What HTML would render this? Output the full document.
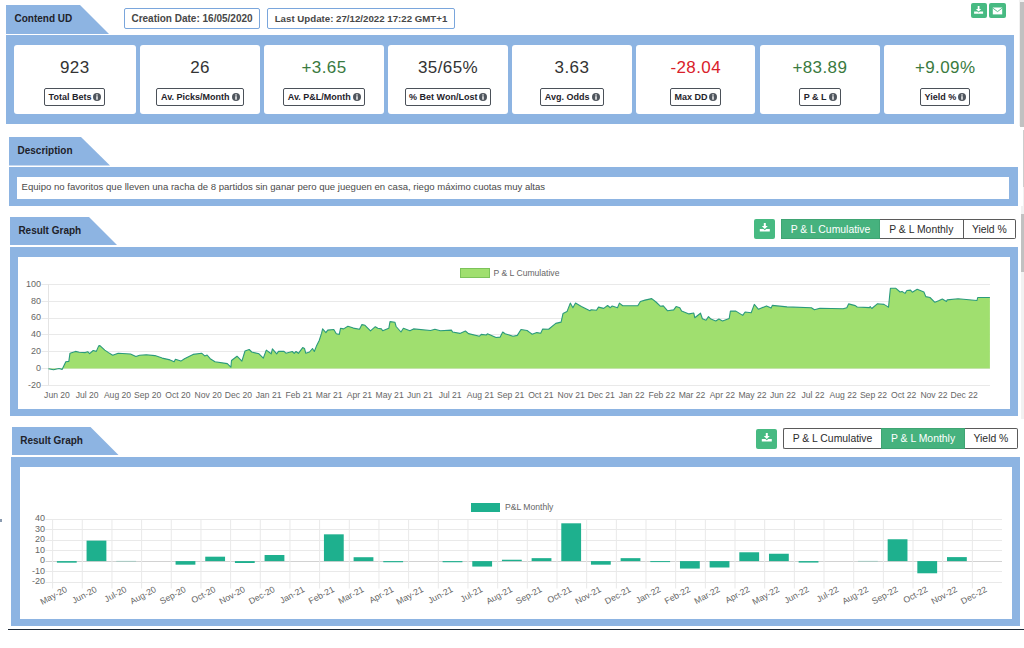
<!DOCTYPE html>
<html><head><meta charset="utf-8">
<style>
*{box-sizing:border-box;margin:0;padding:0}
html,body{width:1024px;height:648px;overflow:hidden;background:#fff;font-family:"Liberation Sans", sans-serif;position:relative}
.a{position:absolute}
.tab{position:absolute;background:#8db4e2}
.tabt{position:absolute;font-size:10px;font-weight:700;color:#1e222a;line-height:12px;white-space:nowrap}
.box{position:absolute;background:#8db4e2}
.white{position:absolute;background:#fff}
.datebox{position:absolute;border:1px solid #7aa6dc;border-radius:2px;background:#fff;font-size:10px;font-weight:700;color:#474747;text-align:center;line-height:19px;white-space:nowrap}
.gbtn{position:absolute;background:#47ba82;border-radius:2px;display:flex;align-items:center;justify-content:center}
.card{position:absolute;top:45px;height:68.6px;background:#fff;border-radius:3px}
.num{position:absolute;left:0;right:0;top:13px;text-align:center;font-size:17px;letter-spacing:0.4px;line-height:20px;white-space:nowrap}
.lblw{position:absolute;left:0;right:0;top:43.2px;display:flex;justify-content:center}
.lbl{display:flex;align-items:center;height:18px;border:1px solid #4b5159;border-radius:2px;padding:1px 3px 0 3.5px;font-size:9px;font-weight:700;color:#1f232b;line-height:15px;white-space:nowrap}
.inf{display:block;width:8px;height:8px;margin-left:2px;margin-top:-0.5px}
.btn{position:absolute;height:20.2px;border:1px solid #5a5a5a;background:#fff;font-size:10.4px;color:#2b2b2b;line-height:18.5px;padding-top:0.8px;text-align:center;white-space:nowrap}
.btn.on{background:#46b27e;border-color:#3fa473;color:#fff}
.ax{font-size:9px;fill:#666;font-family:"Liberation Sans", sans-serif}
.lg{font-size:8.6px;fill:#666;font-family:"Liberation Sans", sans-serif}
.sbt{position:absolute;left:1019px;width:5px;background:#f1f1f1}
.sbth{position:absolute;left:1020px;width:4px;background:#c1c1c1}
</style></head><body>
<!-- section 1 -->
<div class="tab" style="left:6px;top:5px;width:103px;height:29px;clip-path:polygon(0 0,74px 0,103px 29px,0 29px)"></div><div class="tabt" style="left:14.5px;top:13px">Contend UD</div>
<div class="datebox" style="left:124px;top:8px;width:136px;height:21px">Creation Date: 16/05/2020</div>
<div class="datebox" style="left:267px;top:8px;width:188px;height:21px;font-size:9.7px">Last Update: 27/12/2022 17:22 GMT+1</div>
<div class="gbtn" style="left:970.6px;top:2.5px;width:16.2px;height:15.3px"><svg class="a" style="left:0;top:0" width="16.2" height="15.3"><path d="M6.70,3.10 h1.80 v2.79 h1.80 l-2.70,2.70 l-2.70,-2.70 h1.80 z M3.10,8.50 h3.24 l1.26,1.08 l1.26,-1.08 h3.24 v2.34 h-9.00 z" fill="#fff"/></svg></div>
<div class="gbtn" style="left:989px;top:2.5px;width:17px;height:15.3px"><svg class="a" style="left:0;top:0" width="17" height="15.3"><rect x="3.8" y="4.5" width="9.4" height="6.9" fill="#fff"/><path d="M3.9,5.2 L8.5,8.6 L13.1,5.2" fill="none" stroke="#47ba82" stroke-width="0.9"/></svg></div>
<div class="box" style="left:6px;top:35px;width:1008px;height:89px"></div>
<div class="card" style="left:13.7px;width:122.1px"><div class="num" style="color:#333">923</div><div class="lblw"><span class="lbl">Total Bets<svg class="inf" width="8" height="8" viewBox="0 0 8 8"><circle cx="4" cy="4" r="4" fill="#50565e"/><rect x="3.3" y="1.3" width="1.4" height="1.3" fill="#fff"/><rect x="3.3" y="3.2" width="1.4" height="3.5" fill="#fff"/></svg></span></div></div>
<div class="card" style="left:140.1px;width:119.8px"><div class="num" style="color:#333">26</div><div class="lblw"><span class="lbl">Av. Picks/Month<svg class="inf" width="8" height="8" viewBox="0 0 8 8"><circle cx="4" cy="4" r="4" fill="#50565e"/><rect x="3.3" y="1.3" width="1.4" height="1.3" fill="#fff"/><rect x="3.3" y="3.2" width="1.4" height="3.5" fill="#fff"/></svg></span></div></div>
<div class="card" style="left:264.1px;width:119.8px"><div class="num" style="color:#3a7a40">+3.65</div><div class="lblw"><span class="lbl">Av. P&amp;L/Month<svg class="inf" width="8" height="8" viewBox="0 0 8 8"><circle cx="4" cy="4" r="4" fill="#50565e"/><rect x="3.3" y="1.3" width="1.4" height="1.3" fill="#fff"/><rect x="3.3" y="3.2" width="1.4" height="3.5" fill="#fff"/></svg></span></div></div>
<div class="card" style="left:388.2px;width:119.7px"><div class="num" style="color:#333">35/65%</div><div class="lblw"><span class="lbl">% Bet Won/Lost<svg class="inf" width="8" height="8" viewBox="0 0 8 8"><circle cx="4" cy="4" r="4" fill="#50565e"/><rect x="3.3" y="1.3" width="1.4" height="1.3" fill="#fff"/><rect x="3.3" y="3.2" width="1.4" height="3.5" fill="#fff"/></svg></span></div></div>
<div class="card" style="left:512.2px;width:119.5px"><div class="num" style="color:#333">3.63</div><div class="lblw"><span class="lbl">Avg. Odds<svg class="inf" width="8" height="8" viewBox="0 0 8 8"><circle cx="4" cy="4" r="4" fill="#50565e"/><rect x="3.3" y="1.3" width="1.4" height="1.3" fill="#fff"/><rect x="3.3" y="3.2" width="1.4" height="3.5" fill="#fff"/></svg></span></div></div>
<div class="card" style="left:636.0px;width:119.4px"><div class="num" style="color:#d9202a">-28.04</div><div class="lblw"><span class="lbl">Max DD<svg class="inf" width="8" height="8" viewBox="0 0 8 8"><circle cx="4" cy="4" r="4" fill="#50565e"/><rect x="3.3" y="1.3" width="1.4" height="1.3" fill="#fff"/><rect x="3.3" y="3.2" width="1.4" height="3.5" fill="#fff"/></svg></span></div></div>
<div class="card" style="left:760.0px;width:119.7px"><div class="num" style="color:#3a7a40">+83.89</div><div class="lblw"><span class="lbl">P &amp; L<svg class="inf" width="8" height="8" viewBox="0 0 8 8"><circle cx="4" cy="4" r="4" fill="#50565e"/><rect x="3.3" y="1.3" width="1.4" height="1.3" fill="#fff"/><rect x="3.3" y="3.2" width="1.4" height="3.5" fill="#fff"/></svg></span></div></div>
<div class="card" style="left:884.2px;width:122.0px"><div class="num" style="color:#3a7a40">+9.09%</div><div class="lblw"><span class="lbl">Yield %<svg class="inf" width="8" height="8" viewBox="0 0 8 8"><circle cx="4" cy="4" r="4" fill="#50565e"/><rect x="3.3" y="1.3" width="1.4" height="1.3" fill="#fff"/><rect x="3.3" y="3.2" width="1.4" height="3.5" fill="#fff"/></svg></span></div></div>
<div class="sbt" style="top:0;height:126px"></div>
<div class="sbth" style="top:2px;height:124.6px"></div>

<!-- section 2 -->
<div class="tab" style="left:9px;top:137px;width:101px;height:28.6px;clip-path:polygon(0 0,72px 0,101px 28.6px,0 28.6px)"></div><div class="tabt" style="left:17.5px;top:145px">Description</div>
<div class="box" style="left:9px;top:167px;width:1009px;height:39px"></div>
<div class="white" style="left:17px;top:177px;width:992.4px;height:22px"></div>
<div class="a" style="left:21.5px;top:181px;font-size:9.57px;color:#4a4a4a;line-height:12px;white-space:nowrap">Equipo no favoritos que lleven una racha de 8 partidos sin ganar pero que jueguen en casa, riego máximo cuotas muy altas</div>
<div class="a" style="left:1022.6px;top:130px;width:1.4px;height:57px;background:#cdcdcd"></div><div class="a" style="left:1022.6px;top:187px;width:1.4px;height:22px;background:#f0f0f0"></div>

<!-- section 3 -->
<div class="tab" style="left:10px;top:217px;width:107px;height:28px;clip-path:polygon(0 0,79px 0,107px 28px,0 28px)"></div><div class="tabt" style="left:18.4px;top:225px">Result Graph</div>
<div class="gbtn" style="left:754.3px;top:218.8px;width:20.5px;height:20.1px"><svg class="a" style="left:0;top:0" width="20.5" height="20.1"><path d="M9.80,4.00 h2.00 v3.10 h2.00 l-3.00,3.00 l-3.00,-3.00 h2.00 z M5.80,10.00 h3.60 l1.40,1.20 l1.40,-1.20 h3.60 v2.60 h-10.00 z" fill="#fff"/></svg></div>
<div class="btn on" style="left:781px;top:218.8px;width:99px">P &amp; L Cumulative</div>
<div class="btn" style="left:880px;top:218.8px;width:83.6px;border-left:none">P &amp; L Monthly</div>
<div class="btn" style="left:963.6px;top:218.8px;width:52.5px;border-left:none;border-radius:0 2px 2px 0">Yield %</div>
<div class="box" style="left:10px;top:247px;width:1008px;height:169px"></div>
<div class="white" style="left:18px;top:256.6px;width:992px;height:152.2px"></div>
<svg class="a" style="left:0;top:0" width="1024" height="648">
<line x1="41.5" y1="284.50" x2="990" y2="284.50" stroke="#e9e9e9" stroke-width="1"/>
<text x="41" y="286.70" text-anchor="end" class="ax">100</text>
<line x1="41.5" y1="301.50" x2="990" y2="301.50" stroke="#e9e9e9" stroke-width="1"/>
<text x="41" y="303.53" text-anchor="end" class="ax">80</text>
<line x1="41.5" y1="318.50" x2="990" y2="318.50" stroke="#e9e9e9" stroke-width="1"/>
<text x="41" y="320.37" text-anchor="end" class="ax">60</text>
<line x1="41.5" y1="334.50" x2="990" y2="334.50" stroke="#e9e9e9" stroke-width="1"/>
<text x="41" y="337.20" text-anchor="end" class="ax">40</text>
<line x1="41.5" y1="351.50" x2="990" y2="351.50" stroke="#e9e9e9" stroke-width="1"/>
<text x="41" y="354.04" text-anchor="end" class="ax">20</text>
<line x1="41.5" y1="368.50" x2="990" y2="368.50" stroke="#e9e9e9" stroke-width="1"/>
<text x="41" y="370.87" text-anchor="end" class="ax">0</text>
<line x1="41.5" y1="385.50" x2="990" y2="385.50" stroke="#e9e9e9" stroke-width="1"/>
<text x="41" y="387.70" text-anchor="end" class="ax">-20</text>
<line x1="48.5" y1="284.40" x2="48.5" y2="385.40" stroke="#e4e4e4" stroke-width="1"/>
<path d="M48.4,368.8 L53.5,369.7 L59.0,368.5 L62.1,369.4 L65.8,361.7 L68.8,361.4 L70.0,353.2 L75.5,351.4 L79.2,352.3 L85.3,352.6 L87.7,351.7 L89.6,353.6 L93.2,350.5 L96.3,351.4 L98.7,345.9 L99.9,345.6 L104.8,350.1 L108.5,352.6 L112.7,355.3 L118.2,353.2 L130.5,354.0 L135.9,356.5 L139.6,355.3 L146.3,354.8 L154.9,355.6 L162.2,358.1 L170.0,359.9 L174.2,361.7 L175.4,359.3 L180.9,361.1 L184.5,358.7 L193.1,354.4 L201.6,353.2 L204.7,355.9 L207.1,355.0 L210.2,358.7 L215.0,361.7 L227.3,363.6 L230.9,367.2 L231.5,360.5 L237.0,356.2 L241.9,361.1 L245.0,351.0 L249.2,349.5 L251.7,352.0 L259.0,353.8 L263.3,358.1 L266.3,350.1 L271.2,353.8 L272.4,348.9 L276.7,353.8 L278.5,351.4 L284.0,351.4 L285.9,353.2 L292.3,351.5 L294.2,353.3 L296.0,351.5 L298.4,353.3 L302.7,347.6 L304.5,348.5 L305.8,353.3 L309.5,352.0 L312.5,348.5 L314.3,351.5 L316.7,345.4 L319.2,340.5 L321.6,333.2 L322.6,328.9 L325.9,332.6 L327.7,330.1 L333.8,329.5 L336.3,333.8 L339.3,334.4 L340.5,328.3 L343.6,328.9 L347.9,326.2 L353.4,328.1 L359.5,329.3 L361.9,324.6 L365.0,325.3 L370.5,330.8 L375.3,326.7 L377.8,328.3 L381.4,328.9 L382.7,330.8 L388.8,328.3 L390.0,321.6 L394.9,322.2 L396.1,326.5 L401.0,332.0 L403.4,328.3 L409.9,330.8 L413.5,328.9 L430.6,330.5 L434.9,329.3 L440.4,330.8 L451.4,330.1 L452.6,332.0 L459.9,333.4 L465.4,331.0 L468.5,333.6 L479.5,336.2 L481.3,334.4 L486.2,335.0 L487.4,333.8 L490.4,335.0 L496.0,337.5 L500.2,337.1 L502.7,332.0 L505.1,333.8 L513.0,336.2 L517.3,335.4 L521.0,329.5 L527.1,330.5 L530.0,332.6 L532.2,334.3 L536.8,332.6 L540.7,333.3 L542.7,329.0 L548.6,329.3 L555.8,323.4 L561.1,322.1 L563.0,313.6 L567.0,311.6 L570.3,303.1 L572.9,307.7 L575.5,303.1 L581.4,306.4 L589.9,310.7 L591.2,309.7 L596.5,310.3 L598.5,307.1 L603.7,308.4 L607.6,305.5 L610.3,307.7 L612.2,306.0 L617.5,307.7 L619.4,303.1 L622.7,305.7 L637.8,305.7 L640.4,301.5 L645.0,300.1 L651.7,298.6 L656.0,302.0 L660.3,306.2 L663.3,305.9 L667.6,310.8 L673.7,309.9 L676.1,306.6 L679.8,307.8 L681.6,311.1 L689.0,313.9 L693.8,313.0 L694.8,317.8 L700.5,313.2 L702.4,318.8 L706.0,320.3 L708.5,316.6 L710.9,319.1 L715.8,320.9 L718.9,319.1 L722.5,320.9 L729.2,318.5 L730.4,311.1 L735.9,311.1 L742.7,315.4 L745.1,312.0 L751.2,312.7 L754.3,304.4 L758.5,309.3 L766.5,305.9 L770.0,307.5 L771.1,308.1 L772.3,305.4 L787.0,306.9 L811.4,307.8 L814.4,309.7 L819.9,308.2 L843.1,308.8 L846.8,307.8 L848.6,303.9 L855.3,305.6 L857.2,307.0 L869.4,307.6 L870.2,306.6 L871.8,308.5 L877.3,303.8 L884.0,304.4 L887.7,306.6 L888.5,307.2 L890.4,288.3 L895.9,288.3 L900.1,292.0 L902.0,291.4 L905.0,293.4 L906.9,290.5 L910.5,290.1 L912.3,292.2 L917.2,289.3 L923.9,292.0 L925.8,296.6 L930.0,297.5 L934.9,302.3 L938.6,300.8 L942.3,299.1 L946.5,301.5 L947.1,299.9 L958.1,298.7 L977.0,300.5 L977.7,297.5 L989.9,297.5 L989.9,368.6 L48.4,368.6 Z" fill="#a0df6f" stroke="none"/>
<path d="M48.4,368.8 L53.5,369.7 L59.0,368.5 L62.1,369.4 L65.8,361.7 L68.8,361.4 L70.0,353.2 L75.5,351.4 L79.2,352.3 L85.3,352.6 L87.7,351.7 L89.6,353.6 L93.2,350.5 L96.3,351.4 L98.7,345.9 L99.9,345.6 L104.8,350.1 L108.5,352.6 L112.7,355.3 L118.2,353.2 L130.5,354.0 L135.9,356.5 L139.6,355.3 L146.3,354.8 L154.9,355.6 L162.2,358.1 L170.0,359.9 L174.2,361.7 L175.4,359.3 L180.9,361.1 L184.5,358.7 L193.1,354.4 L201.6,353.2 L204.7,355.9 L207.1,355.0 L210.2,358.7 L215.0,361.7 L227.3,363.6 L230.9,367.2 L231.5,360.5 L237.0,356.2 L241.9,361.1 L245.0,351.0 L249.2,349.5 L251.7,352.0 L259.0,353.8 L263.3,358.1 L266.3,350.1 L271.2,353.8 L272.4,348.9 L276.7,353.8 L278.5,351.4 L284.0,351.4 L285.9,353.2 L292.3,351.5 L294.2,353.3 L296.0,351.5 L298.4,353.3 L302.7,347.6 L304.5,348.5 L305.8,353.3 L309.5,352.0 L312.5,348.5 L314.3,351.5 L316.7,345.4 L319.2,340.5 L321.6,333.2 L322.6,328.9 L325.9,332.6 L327.7,330.1 L333.8,329.5 L336.3,333.8 L339.3,334.4 L340.5,328.3 L343.6,328.9 L347.9,326.2 L353.4,328.1 L359.5,329.3 L361.9,324.6 L365.0,325.3 L370.5,330.8 L375.3,326.7 L377.8,328.3 L381.4,328.9 L382.7,330.8 L388.8,328.3 L390.0,321.6 L394.9,322.2 L396.1,326.5 L401.0,332.0 L403.4,328.3 L409.9,330.8 L413.5,328.9 L430.6,330.5 L434.9,329.3 L440.4,330.8 L451.4,330.1 L452.6,332.0 L459.9,333.4 L465.4,331.0 L468.5,333.6 L479.5,336.2 L481.3,334.4 L486.2,335.0 L487.4,333.8 L490.4,335.0 L496.0,337.5 L500.2,337.1 L502.7,332.0 L505.1,333.8 L513.0,336.2 L517.3,335.4 L521.0,329.5 L527.1,330.5 L530.0,332.6 L532.2,334.3 L536.8,332.6 L540.7,333.3 L542.7,329.0 L548.6,329.3 L555.8,323.4 L561.1,322.1 L563.0,313.6 L567.0,311.6 L570.3,303.1 L572.9,307.7 L575.5,303.1 L581.4,306.4 L589.9,310.7 L591.2,309.7 L596.5,310.3 L598.5,307.1 L603.7,308.4 L607.6,305.5 L610.3,307.7 L612.2,306.0 L617.5,307.7 L619.4,303.1 L622.7,305.7 L637.8,305.7 L640.4,301.5 L645.0,300.1 L651.7,298.6 L656.0,302.0 L660.3,306.2 L663.3,305.9 L667.6,310.8 L673.7,309.9 L676.1,306.6 L679.8,307.8 L681.6,311.1 L689.0,313.9 L693.8,313.0 L694.8,317.8 L700.5,313.2 L702.4,318.8 L706.0,320.3 L708.5,316.6 L710.9,319.1 L715.8,320.9 L718.9,319.1 L722.5,320.9 L729.2,318.5 L730.4,311.1 L735.9,311.1 L742.7,315.4 L745.1,312.0 L751.2,312.7 L754.3,304.4 L758.5,309.3 L766.5,305.9 L770.0,307.5 L771.1,308.1 L772.3,305.4 L787.0,306.9 L811.4,307.8 L814.4,309.7 L819.9,308.2 L843.1,308.8 L846.8,307.8 L848.6,303.9 L855.3,305.6 L857.2,307.0 L869.4,307.6 L870.2,306.6 L871.8,308.5 L877.3,303.8 L884.0,304.4 L887.7,306.6 L888.5,307.2 L890.4,288.3 L895.9,288.3 L900.1,292.0 L902.0,291.4 L905.0,293.4 L906.9,290.5 L910.5,290.1 L912.3,292.2 L917.2,289.3 L923.9,292.0 L925.8,296.6 L930.0,297.5 L934.9,302.3 L938.6,300.8 L942.3,299.1 L946.5,301.5 L947.1,299.9 L958.1,298.7 L977.0,300.5 L977.7,297.5 L989.9,297.5" fill="none" stroke="#2a9a7c" stroke-width="1.1" stroke-linejoin="round"/>
<text x="57.0" y="398.2" text-anchor="middle" class="ax" style="font-size:8.6px">Jun 20</text>
<text x="87.2" y="398.2" text-anchor="middle" class="ax" style="font-size:8.6px">Jul 20</text>
<text x="117.5" y="398.2" text-anchor="middle" class="ax" style="font-size:8.6px">Aug 20</text>
<text x="147.7" y="398.2" text-anchor="middle" class="ax" style="font-size:8.6px">Sep 20</text>
<text x="178.0" y="398.2" text-anchor="middle" class="ax" style="font-size:8.6px">Oct 20</text>
<text x="208.2" y="398.2" text-anchor="middle" class="ax" style="font-size:8.6px">Nov 20</text>
<text x="238.4" y="398.2" text-anchor="middle" class="ax" style="font-size:8.6px">Dec 20</text>
<text x="268.7" y="398.2" text-anchor="middle" class="ax" style="font-size:8.6px">Jan 21</text>
<text x="298.9" y="398.2" text-anchor="middle" class="ax" style="font-size:8.6px">Feb 21</text>
<text x="329.2" y="398.2" text-anchor="middle" class="ax" style="font-size:8.6px">Mar 21</text>
<text x="359.4" y="398.2" text-anchor="middle" class="ax" style="font-size:8.6px">Apr 21</text>
<text x="389.6" y="398.2" text-anchor="middle" class="ax" style="font-size:8.6px">May 21</text>
<text x="419.9" y="398.2" text-anchor="middle" class="ax" style="font-size:8.6px">Jun 21</text>
<text x="450.1" y="398.2" text-anchor="middle" class="ax" style="font-size:8.6px">Jul 21</text>
<text x="480.4" y="398.2" text-anchor="middle" class="ax" style="font-size:8.6px">Aug 21</text>
<text x="510.6" y="398.2" text-anchor="middle" class="ax" style="font-size:8.6px">Sep 21</text>
<text x="540.8" y="398.2" text-anchor="middle" class="ax" style="font-size:8.6px">Oct 21</text>
<text x="571.1" y="398.2" text-anchor="middle" class="ax" style="font-size:8.6px">Nov 21</text>
<text x="601.3" y="398.2" text-anchor="middle" class="ax" style="font-size:8.6px">Dec 21</text>
<text x="631.6" y="398.2" text-anchor="middle" class="ax" style="font-size:8.6px">Jan 22</text>
<text x="661.8" y="398.2" text-anchor="middle" class="ax" style="font-size:8.6px">Feb 22</text>
<text x="692.0" y="398.2" text-anchor="middle" class="ax" style="font-size:8.6px">Mar 22</text>
<text x="722.3" y="398.2" text-anchor="middle" class="ax" style="font-size:8.6px">Apr 22</text>
<text x="752.5" y="398.2" text-anchor="middle" class="ax" style="font-size:8.6px">May 22</text>
<text x="782.8" y="398.2" text-anchor="middle" class="ax" style="font-size:8.6px">Jun 22</text>
<text x="813.0" y="398.2" text-anchor="middle" class="ax" style="font-size:8.6px">Jul 22</text>
<text x="843.2" y="398.2" text-anchor="middle" class="ax" style="font-size:8.6px">Aug 22</text>
<text x="873.5" y="398.2" text-anchor="middle" class="ax" style="font-size:8.6px">Sep 22</text>
<text x="903.7" y="398.2" text-anchor="middle" class="ax" style="font-size:8.6px">Oct 22</text>
<text x="934.0" y="398.2" text-anchor="middle" class="ax" style="font-size:8.6px">Nov 22</text>
<text x="964.2" y="398.2" text-anchor="middle" class="ax" style="font-size:8.6px">Dec 22</text>
<rect x="460.5" y="268.5" width="29" height="9" fill="#a0df6f" stroke="#7cc35a" stroke-width="1"/>
<text x="493.5" y="275.9" class="lg">P &amp; L Cumulative</text>
</svg>
<div class="a" style="left:1020.8px;top:206px;width:3.2px;height:213px;background:#f1f1f1"></div>
<div class="a" style="left:1020.8px;top:214px;width:3.2px;height:58px;background:#c1c1c1"></div>

<!-- section 4 -->
<div class="tab" style="left:11.5px;top:427px;width:107px;height:28px;clip-path:polygon(0 0,79px 0,107px 28px,0 28px)"></div><div class="tabt" style="left:20.2px;top:435px">Result Graph</div>
<div class="gbtn" style="left:756px;top:428.6px;width:20.5px;height:20.1px"><svg class="a" style="left:0;top:0" width="20.5" height="20.1"><path d="M9.80,4.00 h2.00 v3.10 h2.00 l-3.00,3.00 l-3.00,-3.00 h2.00 z M5.80,10.00 h3.60 l1.40,1.20 l1.40,-1.20 h3.60 v2.60 h-10.00 z" fill="#fff"/></svg></div>
<div class="btn" style="left:783px;top:428.4px;width:98px;border-right:none;border-radius:2px 0 0 2px">P &amp; L Cumulative</div>
<div class="btn on" style="left:881px;top:428.4px;width:84.1px">P &amp; L Monthly</div>
<div class="btn" style="left:965.1px;top:428.4px;width:52.7px;border-left:none;border-radius:0 2px 2px 0">Yield %</div>
<div class="box" style="left:11.3px;top:457px;width:1008.7px;height:169px"></div>
<div class="white" style="left:20px;top:467px;width:992px;height:151.5px"></div>
<svg class="a" style="left:0;top:0" width="1024" height="648">
<line x1="45.5" y1="519.50" x2="1002" y2="519.50" stroke="#e9e9e9" stroke-width="1"/>
<text x="45" y="521.30" text-anchor="end" class="ax">40</text>
<line x1="45.5" y1="529.50" x2="1002" y2="529.50" stroke="#e9e9e9" stroke-width="1"/>
<text x="45" y="531.80" text-anchor="end" class="ax">30</text>
<line x1="45.5" y1="540.50" x2="1002" y2="540.50" stroke="#e9e9e9" stroke-width="1"/>
<text x="45" y="542.30" text-anchor="end" class="ax">20</text>
<line x1="45.5" y1="550.50" x2="1002" y2="550.50" stroke="#e9e9e9" stroke-width="1"/>
<text x="45" y="552.80" text-anchor="end" class="ax">10</text>
<line x1="45.5" y1="561.50" x2="1002" y2="561.50" stroke="#d2d2d2" stroke-width="1"/>
<text x="45" y="563.30" text-anchor="end" class="ax">0</text>
<line x1="45.5" y1="571.50" x2="1002" y2="571.50" stroke="#e9e9e9" stroke-width="1"/>
<text x="45" y="573.80" text-anchor="end" class="ax">-10</text>
<line x1="45.5" y1="582.50" x2="1002" y2="582.50" stroke="#e9e9e9" stroke-width="1"/>
<text x="45" y="584.30" text-anchor="end" class="ax">-20</text>
<line x1="52.60" y1="519.10" x2="52.60" y2="588.5" stroke="#e9e9e9" stroke-width="1"/>
<line x1="82.27" y1="519.10" x2="82.27" y2="588.5" stroke="#e9e9e9" stroke-width="1"/>
<line x1="111.94" y1="519.10" x2="111.94" y2="588.5" stroke="#e9e9e9" stroke-width="1"/>
<line x1="141.61" y1="519.10" x2="141.61" y2="588.5" stroke="#e9e9e9" stroke-width="1"/>
<line x1="171.28" y1="519.10" x2="171.28" y2="588.5" stroke="#e9e9e9" stroke-width="1"/>
<line x1="200.95" y1="519.10" x2="200.95" y2="588.5" stroke="#e9e9e9" stroke-width="1"/>
<line x1="230.62" y1="519.10" x2="230.62" y2="588.5" stroke="#e9e9e9" stroke-width="1"/>
<line x1="260.29" y1="519.10" x2="260.29" y2="588.5" stroke="#e9e9e9" stroke-width="1"/>
<line x1="289.96" y1="519.10" x2="289.96" y2="588.5" stroke="#e9e9e9" stroke-width="1"/>
<line x1="319.63" y1="519.10" x2="319.63" y2="588.5" stroke="#e9e9e9" stroke-width="1"/>
<line x1="349.30" y1="519.10" x2="349.30" y2="588.5" stroke="#e9e9e9" stroke-width="1"/>
<line x1="378.97" y1="519.10" x2="378.97" y2="588.5" stroke="#e9e9e9" stroke-width="1"/>
<line x1="408.64" y1="519.10" x2="408.64" y2="588.5" stroke="#e9e9e9" stroke-width="1"/>
<line x1="438.31" y1="519.10" x2="438.31" y2="588.5" stroke="#e9e9e9" stroke-width="1"/>
<line x1="467.98" y1="519.10" x2="467.98" y2="588.5" stroke="#e9e9e9" stroke-width="1"/>
<line x1="497.65" y1="519.10" x2="497.65" y2="588.5" stroke="#e9e9e9" stroke-width="1"/>
<line x1="527.32" y1="519.10" x2="527.32" y2="588.5" stroke="#e9e9e9" stroke-width="1"/>
<line x1="556.99" y1="519.10" x2="556.99" y2="588.5" stroke="#e9e9e9" stroke-width="1"/>
<line x1="586.66" y1="519.10" x2="586.66" y2="588.5" stroke="#e9e9e9" stroke-width="1"/>
<line x1="616.33" y1="519.10" x2="616.33" y2="588.5" stroke="#e9e9e9" stroke-width="1"/>
<line x1="646.00" y1="519.10" x2="646.00" y2="588.5" stroke="#e9e9e9" stroke-width="1"/>
<line x1="675.67" y1="519.10" x2="675.67" y2="588.5" stroke="#e9e9e9" stroke-width="1"/>
<line x1="705.34" y1="519.10" x2="705.34" y2="588.5" stroke="#e9e9e9" stroke-width="1"/>
<line x1="735.01" y1="519.10" x2="735.01" y2="588.5" stroke="#e9e9e9" stroke-width="1"/>
<line x1="764.68" y1="519.10" x2="764.68" y2="588.5" stroke="#e9e9e9" stroke-width="1"/>
<line x1="794.35" y1="519.10" x2="794.35" y2="588.5" stroke="#e9e9e9" stroke-width="1"/>
<line x1="824.02" y1="519.10" x2="824.02" y2="588.5" stroke="#e9e9e9" stroke-width="1"/>
<line x1="853.69" y1="519.10" x2="853.69" y2="588.5" stroke="#e9e9e9" stroke-width="1"/>
<line x1="883.36" y1="519.10" x2="883.36" y2="588.5" stroke="#e9e9e9" stroke-width="1"/>
<line x1="913.03" y1="519.10" x2="913.03" y2="588.5" stroke="#e9e9e9" stroke-width="1"/>
<line x1="942.70" y1="519.10" x2="942.70" y2="588.5" stroke="#e9e9e9" stroke-width="1"/>
<line x1="972.37" y1="519.10" x2="972.37" y2="588.5" stroke="#e9e9e9" stroke-width="1"/>
<rect x="56.90" y="561.10" width="19.8" height="1.58" fill="#1eb08e"/>
<rect x="86.57" y="540.62" width="19.8" height="20.48" fill="#1eb08e"/>
<rect x="116.24" y="560.78" width="19.8" height="1.00" fill="#1eb08e" opacity="0.25"/>
<rect x="175.58" y="561.10" width="19.8" height="3.57" fill="#1eb08e"/>
<rect x="205.25" y="556.69" width="19.8" height="4.41" fill="#1eb08e"/>
<rect x="234.92" y="561.10" width="19.8" height="1.89" fill="#1eb08e"/>
<rect x="264.59" y="555.01" width="19.8" height="6.09" fill="#1eb08e"/>
<rect x="323.93" y="534.33" width="19.8" height="26.77" fill="#1eb08e"/>
<rect x="353.60" y="557.22" width="19.8" height="3.88" fill="#1eb08e"/>
<rect x="383.27" y="561.10" width="19.8" height="1.15" fill="#1eb08e"/>
<rect x="442.61" y="561.10" width="19.8" height="1.15" fill="#1eb08e"/>
<rect x="472.28" y="561.10" width="19.8" height="5.46" fill="#1eb08e"/>
<rect x="501.95" y="559.74" width="19.8" height="1.37" fill="#1eb08e"/>
<rect x="531.62" y="558.16" width="19.8" height="2.94" fill="#1eb08e"/>
<rect x="561.29" y="523.30" width="19.8" height="37.80" fill="#1eb08e"/>
<rect x="590.96" y="561.10" width="19.8" height="3.57" fill="#1eb08e"/>
<rect x="620.63" y="558.16" width="19.8" height="2.94" fill="#1eb08e"/>
<rect x="650.30" y="561.10" width="19.8" height="1.00" fill="#1eb08e"/>
<rect x="679.97" y="561.10" width="19.8" height="7.46" fill="#1eb08e"/>
<rect x="709.64" y="561.10" width="19.8" height="6.40" fill="#1eb08e"/>
<rect x="739.31" y="552.28" width="19.8" height="8.82" fill="#1eb08e"/>
<rect x="768.98" y="553.75" width="19.8" height="7.35" fill="#1eb08e"/>
<rect x="798.65" y="561.10" width="19.8" height="1.47" fill="#1eb08e"/>
<rect x="857.99" y="560.78" width="19.8" height="1.00" fill="#1eb08e" opacity="0.25"/>
<rect x="887.66" y="539.26" width="19.8" height="21.84" fill="#1eb08e"/>
<rect x="917.33" y="561.10" width="19.8" height="12.18" fill="#1eb08e"/>
<rect x="947.00" y="557.11" width="19.8" height="3.99" fill="#1eb08e"/>
<text transform="translate(67.8,591.3) rotate(-28)" text-anchor="end" class="ax" style="font-size:8.7px">May-20</text>
<text transform="translate(97.5,591.3) rotate(-28)" text-anchor="end" class="ax" style="font-size:8.7px">Jun-20</text>
<text transform="translate(127.2,591.3) rotate(-28)" text-anchor="end" class="ax" style="font-size:8.7px">Jul-20</text>
<text transform="translate(156.8,591.3) rotate(-28)" text-anchor="end" class="ax" style="font-size:8.7px">Aug-20</text>
<text transform="translate(186.5,591.3) rotate(-28)" text-anchor="end" class="ax" style="font-size:8.7px">Sep-20</text>
<text transform="translate(216.2,591.3) rotate(-28)" text-anchor="end" class="ax" style="font-size:8.7px">Oct-20</text>
<text transform="translate(245.9,591.3) rotate(-28)" text-anchor="end" class="ax" style="font-size:8.7px">Nov-20</text>
<text transform="translate(275.5,591.3) rotate(-28)" text-anchor="end" class="ax" style="font-size:8.7px">Dec-20</text>
<text transform="translate(305.2,591.3) rotate(-28)" text-anchor="end" class="ax" style="font-size:8.7px">Jan-21</text>
<text transform="translate(334.9,591.3) rotate(-28)" text-anchor="end" class="ax" style="font-size:8.7px">Feb-21</text>
<text transform="translate(364.5,591.3) rotate(-28)" text-anchor="end" class="ax" style="font-size:8.7px">Mar-21</text>
<text transform="translate(394.2,591.3) rotate(-28)" text-anchor="end" class="ax" style="font-size:8.7px">Apr-21</text>
<text transform="translate(423.9,591.3) rotate(-28)" text-anchor="end" class="ax" style="font-size:8.7px">May-21</text>
<text transform="translate(453.5,591.3) rotate(-28)" text-anchor="end" class="ax" style="font-size:8.7px">Jun-21</text>
<text transform="translate(483.2,591.3) rotate(-28)" text-anchor="end" class="ax" style="font-size:8.7px">Jul-21</text>
<text transform="translate(512.9,591.3) rotate(-28)" text-anchor="end" class="ax" style="font-size:8.7px">Aug-21</text>
<text transform="translate(542.6,591.3) rotate(-28)" text-anchor="end" class="ax" style="font-size:8.7px">Sep-21</text>
<text transform="translate(572.2,591.3) rotate(-28)" text-anchor="end" class="ax" style="font-size:8.7px">Oct-21</text>
<text transform="translate(601.9,591.3) rotate(-28)" text-anchor="end" class="ax" style="font-size:8.7px">Nov-21</text>
<text transform="translate(631.6,591.3) rotate(-28)" text-anchor="end" class="ax" style="font-size:8.7px">Dec-21</text>
<text transform="translate(661.2,591.3) rotate(-28)" text-anchor="end" class="ax" style="font-size:8.7px">Jan-22</text>
<text transform="translate(690.9,591.3) rotate(-28)" text-anchor="end" class="ax" style="font-size:8.7px">Feb-22</text>
<text transform="translate(720.6,591.3) rotate(-28)" text-anchor="end" class="ax" style="font-size:8.7px">Mar-22</text>
<text transform="translate(750.2,591.3) rotate(-28)" text-anchor="end" class="ax" style="font-size:8.7px">Apr-22</text>
<text transform="translate(779.9,591.3) rotate(-28)" text-anchor="end" class="ax" style="font-size:8.7px">May-22</text>
<text transform="translate(809.6,591.3) rotate(-28)" text-anchor="end" class="ax" style="font-size:8.7px">Jun-22</text>
<text transform="translate(839.3,591.3) rotate(-28)" text-anchor="end" class="ax" style="font-size:8.7px">Jul-22</text>
<text transform="translate(868.9,591.3) rotate(-28)" text-anchor="end" class="ax" style="font-size:8.7px">Aug-22</text>
<text transform="translate(898.6,591.3) rotate(-28)" text-anchor="end" class="ax" style="font-size:8.7px">Sep-22</text>
<text transform="translate(928.3,591.3) rotate(-28)" text-anchor="end" class="ax" style="font-size:8.7px">Oct-22</text>
<text transform="translate(957.9,591.3) rotate(-28)" text-anchor="end" class="ax" style="font-size:8.7px">Nov-22</text>
<text transform="translate(987.6,591.3) rotate(-28)" text-anchor="end" class="ax" style="font-size:8.7px">Dec-22</text>
<rect x="471" y="503" width="29" height="9" fill="#1eb08e"/>
<text x="505" y="510" class="lg">P&amp;L Monthly</text>
</svg>
<div class="a" style="left:0;top:519px;width:2px;height:3px;background:#8a9bb0"></div>
<div class="a" style="left:8px;top:629px;width:1016px;height:1.4px;background:#1d2a38"></div>
</body></html>
